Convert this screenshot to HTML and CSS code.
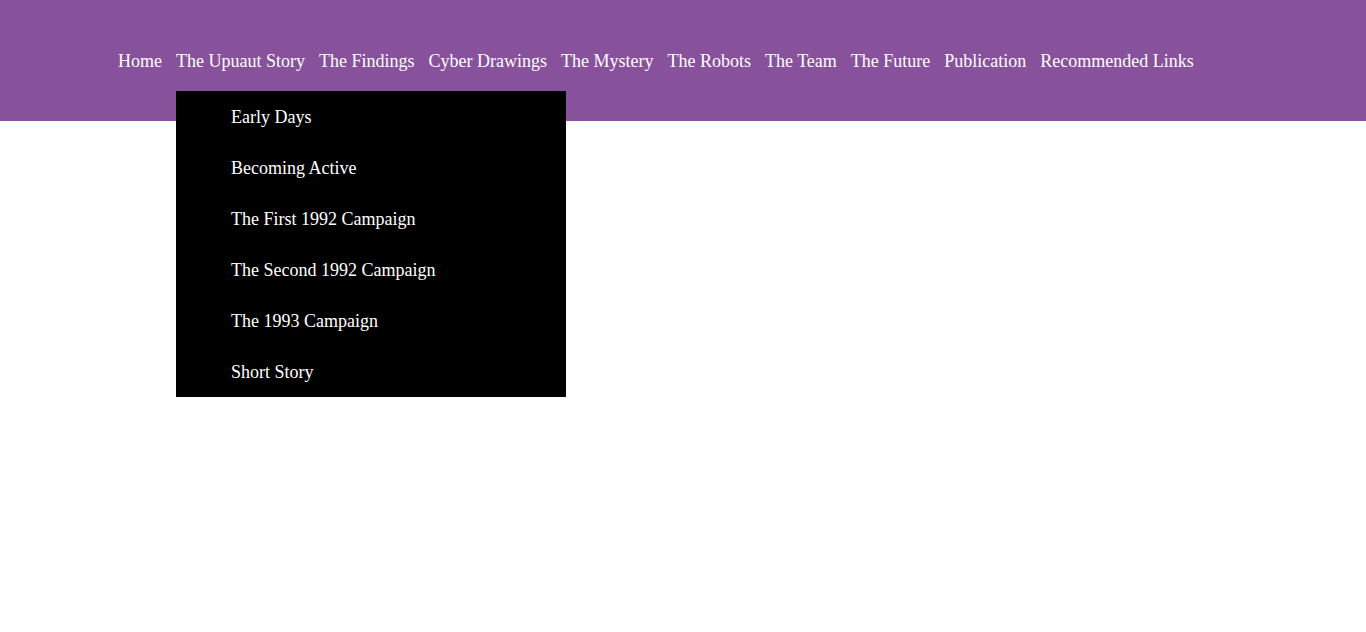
FILE: index.html
```html
<!DOCTYPE html>
<html>
<head>
<meta charset="utf-8">
<link rel="stylesheet" href="styles.css">
</head>
<body class="page">
<div class="topbar">
  <ul class="menu">
    <li><a href="#">Home</a></li>
    <li class="has-sub"><a href="#">The Upuaut Story</a>
      <ul class="submenu">
        <li><a href="#">Early Days</a></li>
        <li><a href="#">Becoming Active</a></li>
        <li><a href="#">The First 1992 Campaign</a></li>
        <li><a href="#">The Second 1992 Campaign</a></li>
        <li><a href="#">The 1993 Campaign</a></li>
        <li><a href="#">Short Story</a></li>
      </ul>
    </li>
    <li><a href="#">The Findings</a></li>
    <li><a href="#">Cyber Drawings</a></li>
    <li><a href="#">The Mystery</a></li>
    <li><a href="#">The Robots</a></li>
    <li><a href="#">The Team</a></li>
    <li><a href="#">The Future</a></li>
    <li><a href="#">Publication</a></li>
    <li><a href="#">Recommended Links</a></li>
  </ul>
</div>
</body>
</html>
```
FILE: styles.css
```css
html {
  background: #fff;
}
.page {
  margin: 0;
  padding: 0;
  min-height: 632px;
  background: linear-gradient(#88519b 0, #88519b 121px, #fff 121px, #fff 100%);
  font-family: "Liberation Serif", "Times New Roman", serif;
}
.topbar {
  padding-top: 31px;
}
.menu {
  list-style: none;
  margin: 0;
  padding: 0 0 0 118px;
  display: flex;
  gap: 14px;
}
.menu > li {
  position: relative;
}
.menu a {
  color: #fff;
  text-decoration: none;
  font-size: 18px;
}
.menu > li > a {
  display: block;
  line-height: 60px;
}
.submenu {
  position: absolute;
  z-index: 20;
  top: 100%;
  left: 0;
  width: 390px;
  margin: 0;
  padding: 0;
  list-style: none;
  background: #000;
}
.submenu li a {
  display: block;
  height: 50px;
  padding-top: 1px;
  line-height: 50px;
  padding-left: 55px;
  white-space: nowrap;
}
```
